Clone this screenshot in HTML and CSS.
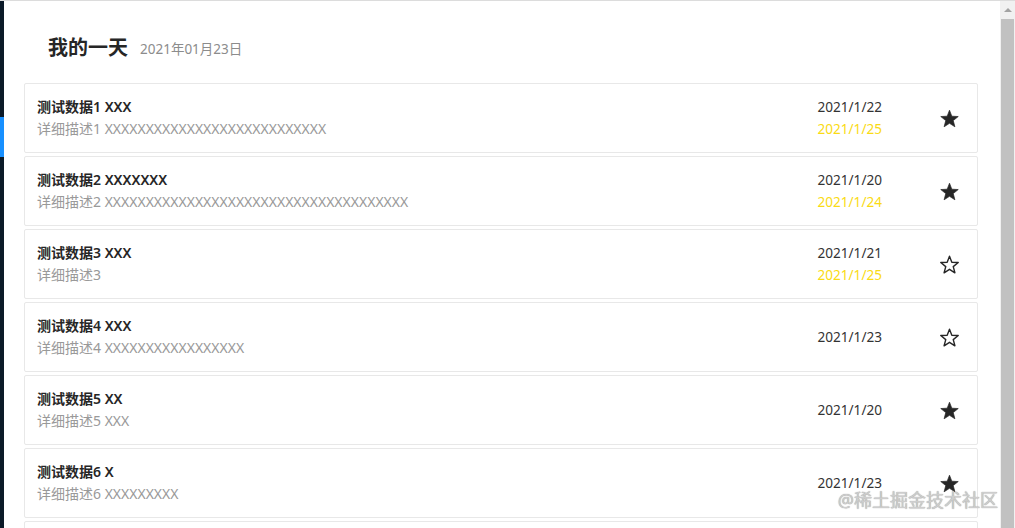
FILE: index.html
```html
<!DOCTYPE html>
<html lang="zh">
<head>
<meta charset="utf-8">
<link rel="stylesheet" href="styles.css">
</head>
<body>
<div class="app">
  <div class="side"><div class="side-active"></div></div>
  <main class="main">
    <header class="head">
      <h1 class="head-title">我的一天</h1>
      <span class="head-date">2021年01月23日</span>
    </header>
    <ul class="list">
      <li class="item">
        <div class="info"><div class="title">测试数据1 XXX</div><div class="desc">详细描述1 XXXXXXXXXXXXXXXXXXXXXXXXXXX</div></div>
        <div class="dates"><div>2021/1/22</div><div class="due">2021/1/25</div></div>
        <svg class="star filled" viewBox="0 0 24 24"><polygon points="12,2.5 14.645,9.36 21.99,9.755 16.28,14.39 18.17,21.49 12,17.5 5.83,21.49 7.72,14.39 2.01,9.755 9.355,9.36"/></svg>
      </li>
      <li class="item">
        <div class="info"><div class="title">测试数据2 XXXXXXX</div><div class="desc">详细描述2 XXXXXXXXXXXXXXXXXXXXXXXXXXXXXXXXXXXXX</div></div>
        <div class="dates"><div>2021/1/20</div><div class="due">2021/1/24</div></div>
        <svg class="star filled" viewBox="0 0 24 24"><polygon points="12,2.5 14.645,9.36 21.99,9.755 16.28,14.39 18.17,21.49 12,17.5 5.83,21.49 7.72,14.39 2.01,9.755 9.355,9.36"/></svg>
      </li>
      <li class="item">
        <div class="info"><div class="title">测试数据3 XXX</div><div class="desc">详细描述3</div></div>
        <div class="dates"><div>2021/1/21</div><div class="due">2021/1/25</div></div>
        <svg class="star outline" viewBox="0 0 24 24"><polygon points="12,2.5 14.645,9.36 21.99,9.755 16.28,14.39 18.17,21.49 12,17.5 5.83,21.49 7.72,14.39 2.01,9.755 9.355,9.36"/></svg>
      </li>
      <li class="item">
        <div class="info"><div class="title">测试数据4 XXX</div><div class="desc">详细描述4 XXXXXXXXXXXXXXXXX</div></div>
        <div class="dates"><div>2021/1/23</div></div>
        <svg class="star outline" viewBox="0 0 24 24"><polygon points="12,2.5 14.645,9.36 21.99,9.755 16.28,14.39 18.17,21.49 12,17.5 5.83,21.49 7.72,14.39 2.01,9.755 9.355,9.36"/></svg>
      </li>
      <li class="item">
        <div class="info"><div class="title">测试数据5 XX</div><div class="desc">详细描述5 XXX</div></div>
        <div class="dates"><div>2021/1/20</div></div>
        <svg class="star filled" viewBox="0 0 24 24"><polygon points="12,2.5 14.645,9.36 21.99,9.755 16.28,14.39 18.17,21.49 12,17.5 5.83,21.49 7.72,14.39 2.01,9.755 9.355,9.36"/></svg>
      </li>
      <li class="item">
        <div class="info"><div class="title">测试数据6 X</div><div class="desc">详细描述6 XXXXXXXXX</div></div>
        <div class="dates"><div>2021/1/23</div></div>
        <svg class="star filled" viewBox="0 0 24 24"><polygon points="12,2.5 14.645,9.36 21.99,9.755 16.28,14.39 18.17,21.49 12,17.5 5.83,21.49 7.72,14.39 2.01,9.755 9.355,9.36"/></svg>
      </li>
      <li class="item item-empty"></li>
    </ul>
    <div class="watermark">@稀土掘金技术社区</div>
  </main>
  <div class="scrollbar">
    <div class="scroll-arrow"></div>
    <div class="scroll-thumb"></div>
  </div>
</div>
</body>
</html>
```
FILE: styles.css
```css
* { box-sizing: border-box; }
html, body {
  margin: 0;
  padding: 0;
  height: 528px;
  overflow: hidden;
  background: #fff;
  font-family: "Noto Sans", "Noto Sans CJK SC", sans-serif;
  color: #262626;
}
.app {
  display: flex;
  height: 528px;
  border-top: 1px solid #dcdcdc;
}
.side {
  width: 4px;
  background: #0b1a28;
  padding-top: 116px;
}
.side-active {
  height: 40px;
  background: #1890ff;
}
.main {
  flex: 1;
  position: relative;
  overflow: hidden;
  padding: 33px 22px 0 20px;
}
.head {
  display: flex;
  align-items: center;
  gap: 12px;
  padding-left: 24px;
  margin-bottom: 21px;
}
.head-title {
  margin: 0;
  font-size: 20px;
  line-height: 28px;
  font-weight: 700;
  color: #262626;
}
.head-date {
  font-size: 13.5px;
  color: #8c8c8c;
}
.list {
  list-style: none;
  margin: 0;
  padding: 0;
  display: flex;
  flex-direction: column;
  gap: 3px;
}
.item {
  display: flex;
  align-items: center;
  border: 1px solid #e8e8e8;
  border-radius: 2px;
  padding: 12px 17px 12px 12px;
  font-size: 14px;
  line-height: 22px;
}
.item-empty { height: 70px; }
.info { flex: 1; }
.title {
  font-weight: 600;
  color: #262626;
}
.desc { color: #999; }
.dates {
  color: #333;
  font-size: 13.6px;
  margin-right: 57px;
}
.due { color: #fadb14; }
.star {
  width: 21px;
  height: 21px;
  overflow: visible;
}
.star.filled polygon {
  fill: #262626;
  stroke: #262626;
  stroke-width: 0.8;
  stroke-linejoin: round;
}
.star.outline polygon {
  fill: none;
  stroke: #262626;
  stroke-width: 1.6;
  stroke-linejoin: round;
}
.watermark {
  position: absolute;
  right: 2px;
  bottom: 17px;
  font-size: 18px;
  line-height: 22px;
  color: #cdcdcd;
  text-shadow: 0 0 1px #8a8a8a;
}
.scrollbar {
  width: 15px;
  background: #f1f1f1;
  display: flex;
  flex-direction: column;
  align-items: center;
}
.scroll-arrow {
  margin-top: 7px;
  width: 0;
  height: 0;
  border-left: 4px solid transparent;
  border-right: 4px solid transparent;
  border-bottom: 4px solid #a3a3a3;
}
.scroll-thumb {
  margin-top: 7px;
  width: 13px;
  flex: 1;
  background: #c1c1c1;
}
```
